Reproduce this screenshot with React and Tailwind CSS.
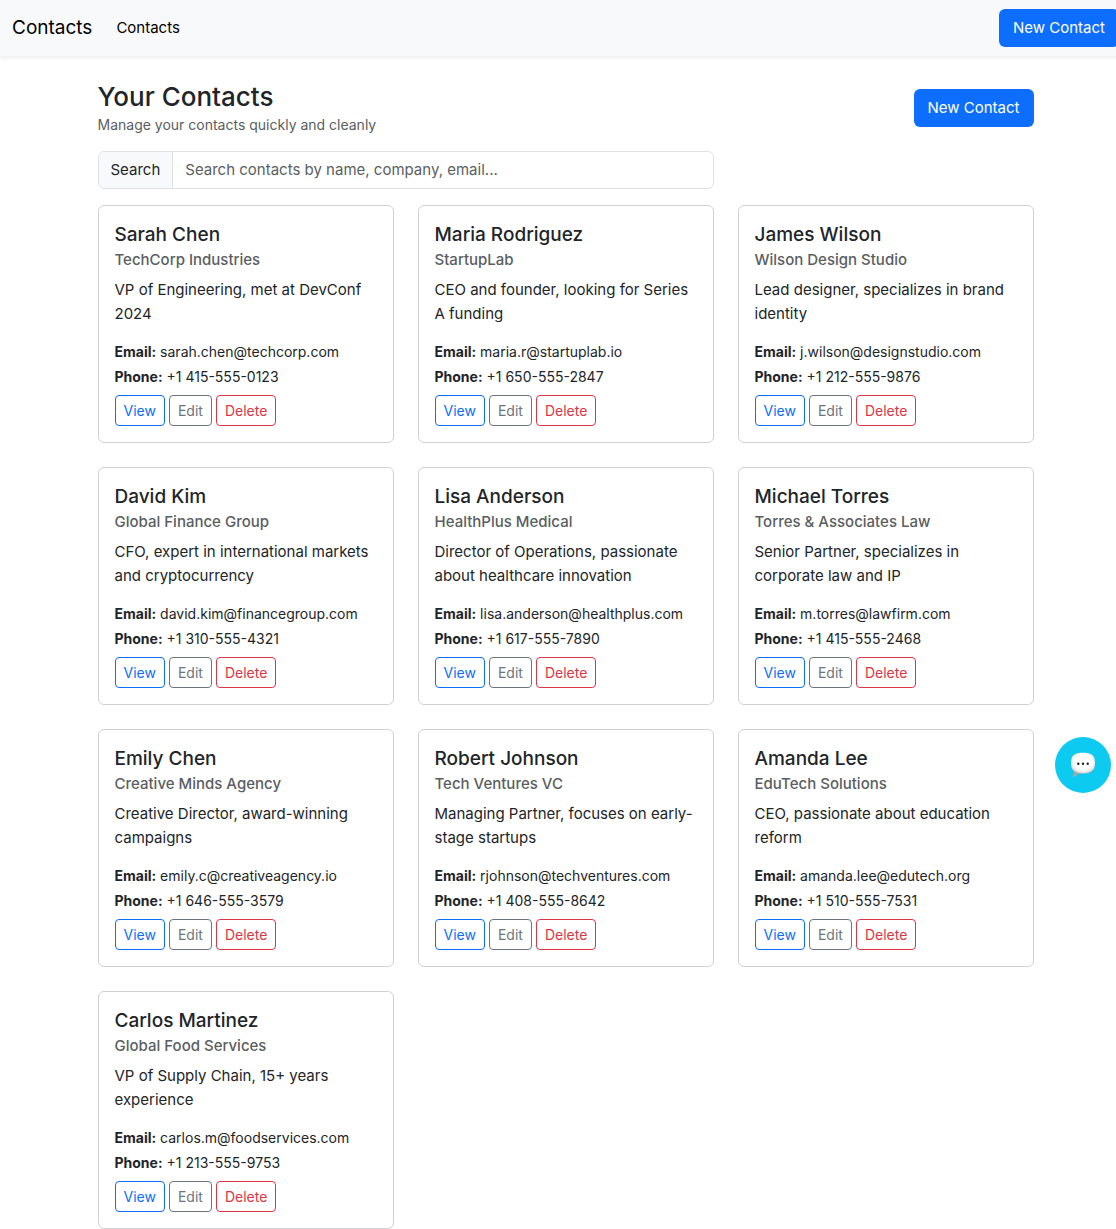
const contacts = [
  { name: 'Sarah Chen', company: 'TechCorp Industries', notes: 'VP of Engineering, met at DevConf 2024', email: 'sarah.chen@techcorp.com', phone: '+1 415-555-0123' },
  { name: 'Maria Rodriguez', company: 'StartupLab', notes: 'CEO and founder, looking for Series A funding', email: 'maria.r@startuplab.io', phone: '+1 650-555-2847' },
  { name: 'James Wilson', company: 'Wilson Design Studio', notes: 'Lead designer, specializes in brand identity', email: 'j.wilson@designstudio.com', phone: '+1 212-555-9876' },
  { name: 'David Kim', company: 'Global Finance Group', notes: 'CFO, expert in international markets and cryptocurrency', email: 'david.kim@financegroup.com', phone: '+1 310-555-4321' },
  { name: 'Lisa Anderson', company: 'HealthPlus Medical', notes: 'Director of Operations, passionate about healthcare innovation', email: 'lisa.anderson@healthplus.com', phone: '+1 617-555-7890' },
  { name: 'Michael Torres', company: 'Torres & Associates Law', notes: 'Senior Partner, specializes in corporate law and IP', email: 'm.torres@lawfirm.com', phone: '+1 415-555-2468' },
  { name: 'Emily Chen', company: 'Creative Minds Agency', notes: 'Creative Director, award-winning campaigns', email: 'emily.c@creativeagency.io', phone: '+1 646-555-3579' },
  { name: 'Robert Johnson', company: 'Tech Ventures VC', notes: 'Managing Partner, focuses on early-stage startups', email: 'rjohnson@techventures.com', phone: '+1 408-555-8642' },
  { name: 'Amanda Lee', company: 'EduTech Solutions', notes: 'CEO, passionate about education reform', email: 'amanda.lee@edutech.org', phone: '+1 510-555-7531' },
  { name: 'Carlos Martinez', company: 'Global Food Services', notes: 'VP of Supply Chain, 15+ years experience', email: 'carlos.m@foodservices.com', phone: '+1 213-555-9753' },
];

function NewContactButton() {
  return (
    <button type="button" className="h-[38px] shrink-0 rounded-md bg-[#0d6efd] px-3.5 text-[15px] leading-6 text-white">
      New Contact
    </button>
  );
}

function ContactCard({ contact }) {
  return (
    <article className="rounded-md border border-[#d0d1d2] bg-white p-4">
      <h2 className="text-[19px] font-medium leading-[26px]">{contact.name}</h2>
      <h3 className="mt-0.5 text-[15px] font-medium leading-[19px] text-[#5a5e62]">{contact.company}</h3>
      <p className="mt-[9px] text-[15px] leading-6">{contact.notes}</p>
      <p className="mt-[15px] text-sm leading-[21px]">
        <strong className="font-bold">Email:</strong> {contact.email}
      </p>
      <p className="mt-1 text-sm leading-[21px]">
        <strong className="font-bold">Phone:</strong> {contact.phone}
      </p>
      <div className="mt-2 flex gap-1 text-sm leading-[21px]">
        <button type="button" className="h-[31px] rounded border border-[#0d6efd] px-2 text-[#0d6efd]">View</button>
        <button type="button" className="h-[31px] rounded border border-[#6c757d] px-2 text-[#6c757d]">Edit</button>
        <button type="button" className="h-[31px] rounded border border-[#dc3545] px-2 text-[#dc3545]">Delete</button>
      </div>
    </article>
  );
}

function ChatIcon() {
  return (
    <svg width="28" height="28" viewBox="0 0 28 28" aria-hidden="true">
      <defs>
        <radialGradient id="bubble" cx="50%" cy="42%" r="62%">
          <stop offset="0.6" stopColor="#ffffff" />
          <stop offset="0.85" stopColor="#e6e6e6" />
          <stop offset="1" stopColor="#a8a8a8" />
        </radialGradient>
      </defs>
      <path d="M4.500 20c1 2.200.6 4-1.300 6 3-.3 5.200-1.600 6.800-4z" fill="#a4a9ac" />
      <path d="M14 1.800C22.500 1.800 26 4.200 26 12S22.500 22.600 14 22.600 2 19.800 2 12 5.500 1.800 14 1.800z" fill="url(#bubble)" />
      <circle cx="9.300" cy="12.800" r="1.200" fill="#222" />
      <circle cx="14" cy="12.800" r="1.200" fill="#222" />
      <circle cx="18.700" cy="12.800" r="1.200" fill="#222" />
    </svg>
  );
}

export default function App() {
  return (
    <div className="overflow-hidden bg-white font-['Inter',sans-serif] text-[#212529]">
      <div className="-mr-[15px]">
        <nav className="flex h-14 items-center bg-[#f8f9fa] px-3 text-black shadow-[0_2px_4px_rgba(0,0,0,0.075)]">
          <a href="#" className="text-[19px] leading-[30px]">Contacts</a>
          <a href="#contacts" className="ml-6 text-[15px] leading-6">Contacts</a>
          <div className="ml-auto flex">
            <NewContactButton />
          </div>
        </nav>

        <main id="contacts" className="mx-auto max-w-[960px] px-3 pt-6">
          <header className="flex items-center justify-between">
            <div>
              <h1 className="text-[26px] font-medium leading-[34px]">Your Contacts</h1>
              <p className="text-sm leading-[21px] text-[#5a5e62]">Manage your contacts quickly and cleanly</p>
            </div>
            <NewContactButton />
          </header>

          <div className="mt-4 grid grid-cols-3 gap-x-6">
            <div className="col-span-2 flex h-[38px] overflow-hidden rounded-md border border-[#dee2e6] text-[15px] leading-6">
              <label htmlFor="search" className="flex items-center border-r border-[#dee2e6] bg-[#f8f9fa] px-3">Search</label>
              <input
                id="search"
                type="text"
                placeholder="Search contacts by name, company, email..."
                className="min-w-0 flex-1 px-3 outline-none placeholder:text-[#5a5e62]"
              />
            </div>
          </div>

          <section className="mt-4 grid grid-cols-3 gap-6">
            {contacts.map((contact) => (
              <ContactCard key={contact.email} contact={contact} />
            ))}
          </section>
        </main>
      </div>

      <button
        type="button"
        aria-label="Open chat"
        className="fixed bottom-[436px] right-[5px] flex size-14 items-center justify-center rounded-full bg-[#0dcaf0]"
      >
        <ChatIcon />
      </button>
    </div>
  );
}
